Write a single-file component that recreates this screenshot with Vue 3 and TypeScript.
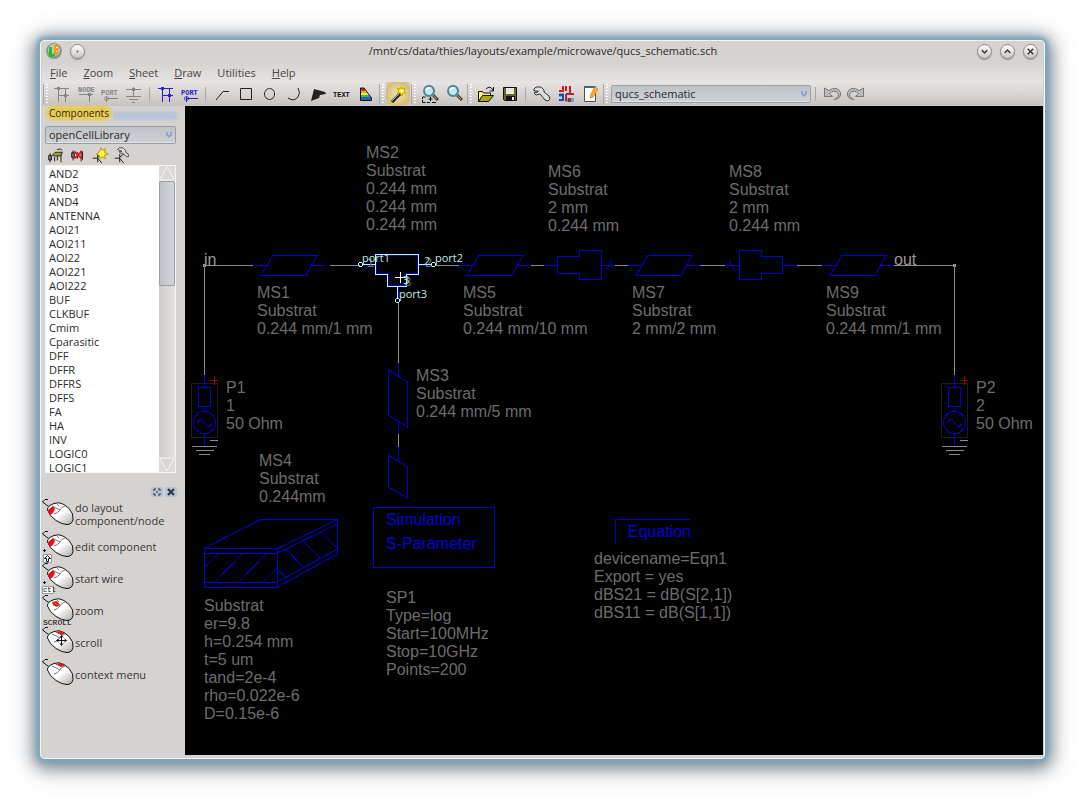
<script setup lang="ts">
import { ref } from 'vue'

interface Shape {
  d?: string
  fill?: string
  stroke?: string
  w?: number
  text?: string
  x?: number
  y?: number
}
interface Tool {
  name: string
  shapes: Shape[]
  active?: boolean
}
interface ToolGroup {
  handle: boolean
  tools: Tool[]
}
interface Label {
  x: number
  y: number
  lines: string[]
}

const grey = '#858585'
const blue = '#2a20cc'
const ink = '#222'

const wireShapes = (c: string): Shape[] => [
  { d: 'M4 6.5H19M8.5 5V20M15.5 6V20M8 13.5H19', stroke: c },
  { d: 'M7 5h3v3h-3zM14 12h3v3h-3z', fill: c },
]
const portShapes = (c: string): Shape[] => [
  { text: 'PORT', x: 3, y: 13, fill: c },
  { d: 'M9 16.5H20M8.500 14.500a2 2 0 1 0 .1 0M8.500 15V20', stroke: c },
]
const lens = (x: number): Shape[] => [
  { d: `M${x + 10} 13l5 5`, stroke: '#444', w: 3 },
  { d: `M${x + 10} 13l4 4`, stroke: '#c98f51', w: 1 },
  { d: `M${x + 6} 4a5 5 0 1 0 .1 0z`, fill: '#bfe8f2', stroke: '#4f8698', w: 2 },
  { d: `M${x + 2} 9c0-4 4-5 7-3-3 0-5 1-7 3`, fill: '#fff' },
]
const wrench = (dx: number, dy: number): Shape[] => [
  {
    d: `M${dx} ${dy + 2}l2-2 5 0 3 3 0 2 5 4 1 3-2 2-3-1-5-6-4 1-2-2 4-1 0-1-4 0z`,
    fill: '#ddd',
    stroke: '#333',
  },
]

const groups: ToolGroup[] = [
  {
    handle: true,
    tools: [
      { name: 'Wire crossing', shapes: wireShapes(grey) },
      {
        name: 'Node name',
        shapes: [
          { text: 'NODE', x: 4, y: 10, fill: grey },
          { d: 'M5 12.500H19M15.500 12V20', stroke: grey },
          { d: 'M14 11h3v3h-3z', fill: grey },
        ],
      },
      { name: 'Port', shapes: portShapes(grey) },
      {
        name: 'Ground',
        shapes: [
          { d: 'M4 7.500H19M11.500 5V14M4 14.500H19M7 17.500H16M10 20.500H13', stroke: grey },
          { d: 'M10 6h3v3h-3z', fill: grey },
        ],
      },
    ],
  },
  {
    handle: false,
    tools: [
      { name: 'Wire', shapes: wireShapes(blue) },
      { name: 'Wire port', shapes: portShapes(blue) },
    ],
  },
  {
    handle: false,
    tools: [
      { name: 'Line', shapes: [{ d: 'M6 18L13 9.500H19', stroke: ink }] },
      { name: 'Rectangle', shapes: [{ d: 'M6.500 6.500h11v11h-11z', stroke: ink }] },
      { name: 'Circle', shapes: [{ d: 'M11.500 6.500a5 5.500 0 1 0 .1 0z', stroke: ink }] },
      { name: 'Arc', shapes: [{ d: 'M16 6q3 5 0 9-4 5-10 1', stroke: ink }] },
      { name: 'Polygon', shapes: [{ d: 'M8 7l11 3 1 2-6 1-1 3-8 3z', fill: ink }] },
      { name: 'Text', shapes: [{ text: 'TEXT', x: 3, y: 15, fill: '#111' }] },
      {
        name: 'Layer colours',
        shapes: [
          { d: 'M6 6h5v3h-5z', fill: '#e02a1a' },
          { d: 'M6 9h7v2h-7z', fill: '#ffa51c' },
          { d: 'M6 11h8v2h-8z', fill: '#fff04a' },
          { d: 'M6 13h10v2h-10z', fill: '#28c62a' },
          { d: 'M6 15h11v3h-11z', fill: '#2857d8' },
          { d: 'M6.500 6v12.500H17.500V16L10 6z', stroke: '#111' },
        ],
      },
    ],
  },
  {
    handle: true,
    tools: [
      {
        name: 'Properties wand',
        active: true,
        shapes: [
          { d: 'M6 20l10-10', stroke: '#222', w: 3 },
          { d: 'M6 19l7-7', stroke: '#aaa', w: 1 },
          { d: 'M15 5l1 2 3-1-1 3 2 2-3 0-1 3-2-3-3 0 2-2-2-3 3 1z', fill: '#ffee22', stroke: '#c8a800' },
          { d: 'M15 8h2v2h-2z', fill: '#fff' },
        ],
      },
    ],
  },
  {
    handle: true,
    tools: [
      {
        name: 'Zoom to fit',
        shapes: [...lens(5), { d: 'M4.500 17v-2h3M4.500 18v2.500h3M9 20.500h3M14 20.500h4M12.500 15v4M10.500 17h4', stroke: '#111' }],
      },
      { name: 'Zoom', shapes: lens(5) },
    ],
  },
  {
    handle: true,
    tools: [
      {
        name: 'Open file',
        shapes: [
          { d: 'M4.500 19.500v-10h4l1 1.500h7v3', fill: '#f4f07c', stroke: '#111' },
          { d: 'M4.500 19.500l4-6h11l-5 6z', fill: '#a9a51d', stroke: '#111' },
          { d: 'M12 7q4-4 7 1M19.500 5v4h-4', stroke: '#111' },
        ],
      },
      {
        name: 'Save file',
        shapes: [
          { d: 'M5.500 5.500h13v13h-12l-1-1z', fill: '#66662c', stroke: '#111' },
          { d: 'M8 6h8v6h-8z', fill: '#e8e8e8' },
          { d: 'M8 14h9v5h-9z', fill: '#111' },
          { d: 'M14 15h2v3h-2z', fill: '#eee' },
        ],
      },
    ],
  },
  {
    handle: false,
    tools: [
      { name: 'Settings', shapes: wrench(4, 5) },
      {
        name: 'Layers',
        shapes: [
          { d: 'M5 11h5v4h-5zM11 16h9v4h-9z', fill: '#53b3aa' },
          { d: 'M5 13H9V19M5 18H9M12 12H19M15 16V20', stroke: '#1e49c4', w: 2 },
          { d: 'M5 9H9V4M12 12V19M12 4V9M16 4V12H20M16 16V20', stroke: '#df1818', w: 2 },
        ],
      },
      {
        name: 'Edit notes',
        shapes: [
          { d: 'M6.500 5.500h11v14h-11z', fill: '#fafcff', stroke: '#465164' },
          { d: 'M6 4h12v2H6z', fill: '#536078' },
          { d: 'M12 16l1-4 4-7 3 2-5 8z', fill: '#ffa928', stroke: '#e39226' },
        ],
      },
    ],
  },
]

const undo: Shape[] = [
  { d: 'M4.500 6v8.500h8l-3-3q4-4 8-1 3 4-3 7 7-1 6-7-3-7-12-2z', fill: '#bbb', stroke: '#777' },
]
const redo: Shape[] = [
  { d: 'M19.500 6v8.500h-8l3-3q-4-4-8-1-3 4 3 7-7-1-6-7 3-7 12-2z', fill: '#bbb', stroke: '#777' },
]

const libTools: Tool[] = [
  {
    name: 'Open library',
    shapes: [
      { d: 'M5.500 9v10M4 11.500h3v5h-3zM10.500 13v5M13.500 10v7M17.500 10v9', stroke: '#111' },
      { d: 'M8 11l3-3h3l5 0-2 4h-8z', fill: '#a5a223', stroke: '#222' },
      { d: 'M13 5q4-2 6 1', stroke: '#222' },
    ],
  },
  {
    name: 'Delete component',
    shapes: [
      { d: 'M6.500 6v11M5 8.500h3v5h-3zM11.500 8v7M15.500 6v12M17 7v9', stroke: '#111' },
      { d: 'M8 7l8 8M16 7l-8 8', stroke: '#e01515', w: 2 },
    ],
  },
  {
    name: 'New component',
    shapes: [
      { d: 'M4 14.500h6M9.500 10v9M10 13l4-3M10 15l4 5', stroke: '#111' },
      { d: 'M13 3l1.500 3L18 4l-1 4 4 2-4 1 1 4-4-2-2 2-1-4-3-1 3-2z', fill: '#fff34a', stroke: '#a99700' },
    ],
  },
  {
    name: 'Edit component',
    shapes: [
      { d: 'M4 14.500h6M9.500 10v9M10 13l4-3M10 15l4 5', stroke: '#111' },
      { d: 'M7 5l2-2h4l3 3v2l3 2v3l-2 0-4-4-3 0-1-2 3 0z', fill: '#ddd', stroke: '#444' },
    ],
  },
]

const menus = ['File', 'Zoom', 'Sheet', 'Draw', 'Utilities', 'Help']
const cells = [
  'AND2', 'AND3', 'AND4', 'ANTENNA', 'AOI21', 'AOI211', 'AOI22', 'AOI221', 'AOI222', 'BUF', 'CLKBUF',
  'Cmim', 'Cparasitic', 'DFF', 'DFFR', 'DFFRS', 'DFFS', 'FA', 'HA', 'INV', 'LOGIC0', 'LOGIC1',
]
const schematic = ref('qucs_schematic')
const library = ref('openCellLibrary')
const cell = ref('')

const leftKey = 'M6 12l5-4 2 3-2 4-3 2z'
const wheel = 'M10 8l5-1 3 4-3 2-4-2z'
const rightKey = 'M13 6l6-1 4 3-4 1z'
const hints = [
  { text: ['do layout', 'component/node'], red: leftKey, extra: '' },
  { text: ['edit component'], red: leftKey, extra: 'shift' },
  { text: ['start wire'], red: leftKey, extra: 'ctl' },
  { text: ['zoom'], red: wheel, extra: 'SCROLL' },
  { text: ['scroll'], red: rightKey, extra: 'move' },
  { text: ['context menu'], red: rightKey, extra: '' },
]

const labels: Label[] = [
  { x: 366, y: 158, lines: ['MS2', 'Substrat', '0.244 mm', '0.244 mm', '0.244 mm'] },
  { x: 548, y: 177, lines: ['MS6', 'Substrat', '2 mm', '0.244 mm'] },
  { x: 729, y: 177, lines: ['MS8', 'Substrat', '2 mm', '0.244 mm'] },
  { x: 257, y: 298, lines: ['MS1', 'Substrat', '0.244 mm/1 mm'] },
  { x: 463, y: 298, lines: ['MS5', 'Substrat', '0.244 mm/10 mm'] },
  { x: 632, y: 298, lines: ['MS7', 'Substrat', '2 mm/2 mm'] },
  { x: 826, y: 298, lines: ['MS9', 'Substrat', '0.244 mm/1 mm'] },
  { x: 416, y: 381, lines: ['MS3', 'Substrat', '0.244 mm/5 mm'] },
  { x: 226, y: 393, lines: ['P1', '1', '50 Ohm'] },
  { x: 976, y: 393, lines: ['P2', '2', '50 Ohm'] },
  { x: 259, y: 466, lines: ['MS4', 'Substrat', '0.244mm'] },
  { x: 204, y: 611, lines: ['Substrat', 'er=9.8', 'h=0.254 mm', 't=5 um', 'tand=2e-4', 'rho=0.022e-6', 'D=0.15e-6'] },
  { x: 386, y: 603, lines: ['SP1', 'Type=log', 'Start=100MHz', 'Stop=10GHz', 'Points=200'] },
  { x: 594, y: 564, lines: ['devicename=Eqn1', 'Export = yes', 'dBS21 = dB(S[2,1])', 'dBS11 = dB(S[1,1])'] },
]
const strips = [261, 467, 636, 830]
</script>

<template>
  <div class="desktop">
    <main class="window">
      <header class="titlebar">
        <svg class="app-logo" viewBox="0 0 16 16" aria-hidden="true">
          <circle cx="8" cy="8" r="8" fill="#8f9492" />
          <circle cx="8" cy="7" r="6" fill="#c7cac8" />
          <path d="M3 4h3v7l3-1v3l-6 1z" fill="#10c824" />
          <path d="M8 2h4l2 2-2 3 1 3-3 2-3-1 1-2z" fill="#f59a1c" />
          <path d="M10 4.500h2M10 8.500h1" stroke="#fff" />
        </svg>
        <button class="round" type="button" aria-label="Window menu">
          <svg viewBox="0 0 14 14"><circle cx="7" cy="7" r="1" /></svg>
        </button>
        <h1>/mnt/cs/data/thies/layouts/example/microwave/qucs_schematic.sch</h1>
        <button class="round" type="button" aria-label="Minimize">
          <svg viewBox="0 0 14 14"><path d="M4 5.500l3 3 3-3" /></svg>
        </button>
        <button class="round" type="button" aria-label="Maximize">
          <svg viewBox="0 0 14 14"><path d="M4 8.500l3-3 3 3" /></svg>
        </button>
        <button class="round" type="button" aria-label="Close">
          <svg viewBox="0 0 14 14"><path d="M4 4l6 6M10 4l-6 6" /></svg>
        </button>
      </header>

      <nav class="menubar">
        <button v-for="m in menus" :key="m" type="button">
          <u v-if="m !== 'Utilities'">{{ m[0] }}</u><template v-else>{{ m[0] }}</template>{{ m.slice(1) }}
        </button>
      </nav>

      <div class="toolbar">
        <template v-for="(g, gi) in groups" :key="gi">
          <span :class="g.handle ? 'grip' : 'rule'"></span>
          <button
            v-for="t in g.tools"
            :key="t.name"
            type="button"
            class="tool"
            :class="{ active: t.active }"
            :aria-label="t.name"
          >
            <svg viewBox="0 0 24 24">
              <template v-for="(s, si) in t.shapes" :key="si">
                <text v-if="s.text" :x="s.x" :y="s.y" :fill="s.fill">{{ s.text }}</text>
                <path v-else :d="s.d" :fill="s.fill ?? 'none'" :stroke="s.stroke" :stroke-width="s.w ?? 1" />
              </template>
            </svg>
          </button>
        </template>
        <span class="grip"></span>
        <label class="combo sheet">
          <select v-model="schematic" aria-label="Cell">
            <option>qucs_schematic</option>
          </select>
          <svg viewBox="0 0 8 8"><path d="M1 1h2v3H1zM5 1h2v3H5zM1 4h6L4 7z" /></svg>
        </label>
        <span class="rule"></span>
        <button type="button" class="tool" aria-label="Undo">
          <svg viewBox="0 0 24 24"><path v-for="s in undo" :key="s.d" :d="s.d" :fill="s.fill" :stroke="s.stroke" /></svg>
        </button>
        <button type="button" class="tool" aria-label="Redo">
          <svg viewBox="0 0 24 24"><path v-for="s in redo" :key="s.d" :d="s.d" :fill="s.fill" :stroke="s.stroke" /></svg>
        </button>
      </div>

      <div class="body">
        <aside class="sidebar">
          <div class="dock-title"><h2>Components</h2><span></span></div>
          <label class="combo">
            <select v-model="library" aria-label="Library">
              <option>openCellLibrary</option>
            </select>
            <svg viewBox="0 0 8 8"><path d="M1 1h2v3H1zM5 1h2v3H5zM1 4h6L4 7z" /></svg>
          </label>
          <div class="lib-tools">
            <button v-for="t in libTools" :key="t.name" type="button" :aria-label="t.name">
              <svg viewBox="0 0 24 22">
                <path
                  v-for="(s, si) in t.shapes"
                  :key="si"
                  :d="s.d"
                  :fill="s.fill ?? 'none'"
                  :stroke="s.stroke"
                  :stroke-width="s.w ?? 1"
                />
              </svg>
            </button>
          </div>
          <div class="cells">
            <select v-model="cell" size="22" aria-label="Components">
              <option v-for="c in cells" :key="c">{{ c }}</option>
            </select>
            <div class="scroll">
              <button type="button" aria-label="Scroll up">
                <svg viewBox="0 0 16 15"><path d="M1 14L8 1l7 13z" /></svg>
              </button>
              <div class="track"><div class="thumb"></div></div>
              <button type="button" aria-label="Scroll down">
                <svg viewBox="0 0 16 15"><path d="M1 1l7 13L15 1z" /></svg>
              </button>
            </div>
          </div>
          <div class="dock-buttons">
            <button type="button" aria-label="Float panel">
              <svg viewBox="0 0 12 10"><path d="M3 4V2h2M7 2h2v2M9 6v2H7M5 8H3V6M6 4v2" /></svg>
            </button>
            <button type="button" aria-label="Close panel">
              <svg viewBox="0 0 12 10"><path d="M3 2l6 6M9 2L3 8" stroke-width="2" /></svg>
            </button>
          </div>
          <ul class="hints">
            <li v-for="h in hints" :key="h.text[0]">
              <svg viewBox="0 0 33 32">
                <defs>
                  <linearGradient id="shell" x1="0" y1="0" x2="1" y2="1">
                    <stop offset="0.500" stop-color="#fff" />
                    <stop offset="1" stop-color="#aaa" />
                  </linearGradient>
                </defs>
                <path d="M6 1.500H3L.5 4l4 3 2 1" fill="none" stroke="#111" />
                <path
                  d="M5.500 12Q5 8 12 5.500q5-2 10 1l5 4q5 5 4 11-1 5-6 5-5 0-11-4-7-5-8.500-10.500z"
                  fill="url(#shell)"
                  stroke="#111"
                />
                <path :d="h.red" fill="#f01010" />
                <path d="M10 8l8 4M12 16q4-1 6-4 1-3 5-4M15 6l2 2" fill="none" stroke="#777" />
                <path v-if="h.extra === 'move'" d="M19.500 10v9M15 14.500h9M18 11.500l1.500-2 1.500 2M18 17.500l1.500 2 1.500-2M16.500 13l-2 1.500 2 1.500M22.500 13l2 1.500-2 1.500" fill="none" stroke="#111" />
                <path v-if="h.extra === 'shift' || h.extra === 'ctl'" d="M1 20.500h3M2.500 19v3" stroke="#111" />
                <template v-if="h.extra === 'shift'">
                  <path d="M1.500 24.500h8v8h-8z" fill="#fff" stroke="#999" />
                  <path d="M5.500 25.500l3 3h-2v3h-2v-3h-2z" fill="none" stroke="#111" />
                </template>
                <template v-if="h.extra === 'ctl'">
                  <path d="M.5 24.500h11v7H.5z" fill="#fff" stroke="#999" />
                  <text x="1" y="30">ctl</text>
                </template>
                <text v-if="h.extra === 'SCROLL'" x="1" y="31" class="wide">SCROLL</text>
              </svg>
              <span><template v-for="(l, i) in h.text" :key="l"><br v-if="i" />{{ l }}</template></span>
            </li>
          </ul>
        </aside>

        <section class="canvas" aria-label="Schematic">
          <svg>
            <g transform="translate(-185 -106)" fill="none">
              <g class="wire">
                <path d="M204.500 265.500H253M330 265.500H360M436 265.500H459M531 265.500H544M615 265.500H629M700 265.500H725M797 265.500H822M893 265.500H954.500" />
                <path d="M204.500 265.500V375M954.500 265.500V375M398.500 303V363M398.500 434V447" />
                <path d="M203 264h3v3h-3zM953 264h3v3h-3z" class="dot" />
              </g>
              <g class="part">
                <path v-for="x in strips" :key="x" :d="`M${x + 12} 255.500h44l-11 20h-45zM${x - 8} 265.500h14M${x + 50} 265.500h14`" />
                <path d="M557.500 256.500H579.500V250.500H601.500V279.500H579.500V273.500H557.500zM544 265.500H557M602 265.500H615M606 271L612 260" />
                <path d="M739.500 250.500H761.500V256.500H782.500V273.500H761.500V279.500H739.500zM725 265.500H739M783 265.500H797M729 260L735 271" />
                <path d="M388.500 370L407.500 382V427L388.500 415zM398.500 363V377M398.500 421V434M398.500 447V461" />
                <path d="M388.500 455L407.500 467V498L388.500 487z" />
                <path d="M204.500 548.500H277.500V587.500H204.500zM204 553.500H277M204 582.500H277M204 548.500L260.500 519.500H337.500L277.500 548.500M337.500 519V554M277.500 553L337.500 524M277.500 582L337.500 549M277.500 587L337.500 554" />
                <path d="M204 568L219 553M215 582L243 553M239 582L267 553M263 582L277 568M277 569L286 577M286 549L303 567M303 541L320 558M321 532L337 548" />
                <path d="M373.500 507.500H494.500V567.500H373.500zM690 519.500H615.500V544" />
              </g>
              <g v-for="dx in [0, 750]" :key="dx" :transform="`translate(${dx} 0)`">
                <path class="bounds" d="M191.500 383.500H217.500V437.500H191.500z" />
                <path class="part" d="M204.500 375V387M198.500 387.500H210.500V406.500H198.500zM204.500 407V411M204.500 433V446M204.500 411.500a11 11 0 1 0 .1 0zM197 423q4-7 7.500 0t7.500 0" />
                <path class="wire" d="M210 440.500H218M192 446.500H217M196 450.500H214M199 454.500H210" />
                <path class="plus" d="M210 380.500H218M214.500 376V385" />
              </g>
              <g class="tee-shadow">
                <path d="M376.500 255.500H417.500V273.500H405.500V285.500H388.500V273.500H376.500zM363 265.500H376M419 265.500H431M398.500 287V298" />
              </g>
              <g class="tee">
                <path d="M375.500 254.500H418.500V274.500H406.500V286.500H387.500V274.500H375.500zM363 264.500H375M419 264.500H431M397.500 287V298" />
                <circle cx="360.500" cy="264.500" r="2" />
                <circle cx="433.500" cy="264.500" r="2" />
                <circle cx="397.500" cy="300.500" r="2" />
                <path d="M395 277.500H406M400.500 272V283" class="cursor" />
              </g>
              <g class="value">
                <text v-for="l in labels" :key="`${l.x}-${l.y}`">
                  <tspan v-for="(line, i) in l.lines" :key="i" :x="l.x" :y="l.y + i * 18">{{ line }}</tspan>
                </text>
              </g>
              <g class="pin">
                <text x="367" y="267">1</text>
                <text x="425" y="267">2</text>
                <text x="404" y="286">3</text>
              </g>
              <g class="net">
                <text x="204" y="265">in</text>
                <text x="894" y="265">out</text>
              </g>
              <g class="block">
                <text x="386" y="525">Simulation</text>
                <text x="386" y="549">S-Parameter</text>
                <text x="628" y="537">Equation</text>
              </g>
              <g class="port">
                <text x="362" y="262">port1</text>
                <text x="435" y="262">port2</text>
                <text x="399" y="298">port3</text>
                <text x="424" y="265">2</text>
                <text x="403" y="284">3</text>
              </g>
            </g>
          </svg>
        </section>
      </div>
    </main>
  </div>
</template>

<style>
body {
  margin: 0;
  background: #fff;
}
</style>

<style scoped>
* {
  box-sizing: border-box;
}
.desktop {
  display: flex;
  min-height: 100vh;
  padding: 40px;
  overflow: hidden;
  font: 11px/14px 'Open Sans', 'Noto Sans', sans-serif;
  color: #2c2a29;
}
button {
  padding: 0;
  border: 0;
  background: none;
  color: inherit;
  font: inherit;
}
svg {
  display: block;
}
.window {
  display: flex;
  flex: 1;
  flex-direction: column;
  min-width: 0;
  padding: 0 2px 4px;
  border-radius: 5px;
  background: #d6d2cf;
  box-shadow: inset 0 0 0 1px #f2f4f5, 0 0 4px 3px #76a9c2, 0 3px 16px 6px rgba(70, 84, 98, 0.6),
    0 4px 26px 6px rgba(90, 100, 110, 0.35);
}
.titlebar {
  display: flex;
  align-items: center;
  height: 22px;
  padding: 0 5px 0 4px;
  gap: 8px;
}
.app-logo {
  width: 16px;
  height: 16px;
}
h1 {
  flex: 1;
  margin: 0;
  padding-left: 24px;
  font-size: 11px;
  font-weight: 400;
  text-align: center;
}
.round {
  width: 15px;
  height: 15px;
  border: 1px solid #8d8a88;
  border-radius: 50%;
  background: linear-gradient(#fff, #c9c6c3);
  box-shadow: 0 1px 1px #999;
}
.round path,
.round circle {
  fill: none;
  stroke: #333;
  stroke-width: 1.5;
}
.round circle {
  fill: #555;
  stroke: none;
}
.menubar {
  display: flex;
  gap: 16px;
  height: 20px;
  padding: 3px 8px 0;
  background: linear-gradient(#d6d2cf, #e5e3e2);
}
.menubar button {
  height: 16px;
  color: #4a4644;
}
.toolbar {
  display: flex;
  align-items: center;
  height: 24px;
  background: linear-gradient(#e6e4e3, #c7c2bf);
}
.tool {
  flex: none;
  width: 24px;
  height: 24px;
}
.tool svg {
  width: 24px;
  height: 24px;
}
.tool text,
.hints text {
  font: bold 7px 'Liberation Mono', monospace;
}
.hints text {
  font-weight: 400;
}
.hints .wide {
  font-size: 8px;
}
.active {
  background: radial-gradient(#e6d69e 30%, #d3bf79 70%, #d7d2c8);
}
.rule,
.grip {
  flex: none;
  width: 8px;
  height: 20px;
  background: linear-gradient(#aaa6a3, #aaa6a3) 3px 3px / 1px 14px no-repeat;
}
.grip {
  background: linear-gradient(#aaa6a3, #aaa6a3) 1px 0 / 1px 20px no-repeat,
    radial-gradient(#fff 40%, transparent 50%) 4px 2px / 2px 3px repeat-y;
}
.combo {
  position: relative;
  display: block;
  height: 18px;
}
.sheet {
  flex: 0 1 200px;
  margin: 0 1px;
}
.combo select {
  display: block;
  width: 100%;
  height: 18px;
  padding: 0 3px;
  border: 1px solid #999fa8;
  border-radius: 2px;
  background: linear-gradient(#bfc3c8, #cfd1d4);
  box-shadow: inset 0 -1px #e0e2e4;
  color: #2c2a29;
  font: inherit;
  appearance: none;
}
.combo svg {
  position: absolute;
  top: 5px;
  right: 3px;
  width: 8px;
  height: 8px;
  fill: #86a5ce;
}
.body {
  display: flex;
  flex: 1;
  min-height: 0;
}
.sidebar {
  display: flex;
  flex: none;
  flex-direction: column;
  width: 143px;
  padding: 0 9px 0 3px;
}
.dock-title {
  display: flex;
  align-items: center;
  height: 20px;
  padding: 0 0 6px 4px;
}
.dock-title h2 {
  margin: 0;
  border-radius: 4px;
  background: #e8cb4e;
  box-shadow: 0 0 3px 3px #e8cb4e;
  font-size: 10px;
  font-weight: 500;
  line-height: 8px;
}
.dock-title span {
  flex: 1;
  height: 7px;
  margin: 5px 0 0 5px;
  background: #bac6d7;
  box-shadow: 0 0 3px 1px #bac6d7;
}
.lib-tools {
  display: flex;
  height: 21px;
}
.lib-tools button {
  width: 22px;
}
.lib-tools svg {
  width: 22px;
  height: 20px;
}
.cells {
  display: flex;
  height: 308px;
  border: 1px solid #f4f4f4;
  background: #fff;
}
.cells select {
  flex: 1;
  min-width: 0;
  padding: 0;
  overflow: hidden;
  border: 0;
  outline: 0;
  background: #fff;
  color: #2c2a29;
  font: inherit;
}
.cells option {
  height: 14px;
  min-height: 14px;
  padding: 0 3px;
  line-height: 14px;
}
.scroll {
  display: flex;
  flex-direction: column;
  width: 16px;
  background: #dedad8;
}
.scroll svg {
  width: 16px;
  height: 15px;
  fill: #dad6d3;
  stroke: #f6f6f6;
}
.track {
  flex: 1;
  background: linear-gradient(90deg, #cfcac8, #e4e1df);
}
.thumb {
  height: 38%;
  border: 1px solid #999fa8;
  border-radius: 2px;
  background: linear-gradient(90deg, #bfc3c8, #d2d4d8);
}
.dock-buttons {
  display: flex;
  justify-content: flex-end;
  gap: 2px;
  height: 25px;
  margin-right: -1px;
  padding-top: 14px;
}
.dock-buttons button {
  width: 12px;
  height: 10px;
  background: #b6c4d6;
}
.dock-buttons svg {
  width: 12px;
  height: 10px;
  fill: none;
  stroke: #333;
}
.hints {
  margin: 0 -9px 0 -3px;
  padding: 0;
  list-style: none;
}
.hints li {
  display: flex;
  align-items: center;
  height: 32px;
  color: #3a3735;
  line-height: 13px;
}
.hints svg {
  width: 33px;
  height: 32px;
  overflow: visible;
}
.canvas {
  flex: 1;
  min-width: 0;
  background: #000;
}
.canvas svg {
  width: 100%;
  height: 100%;
  shape-rendering: crispEdges;
}
.wire {
  stroke: #8c8c8c;
}
.dot {
  fill: #8c8c8c;
  stroke: none;
}
.part {
  stroke: #0000cc;
}
.bounds {
  stroke: #1c1c1c;
}
.plus {
  stroke: #a00000;
}
.tee-shadow {
  stroke: #0000d0;
}
.tee {
  stroke: #bff4fa;
}
.cursor {
  stroke: #fff;
}
.value,
.net,
.block {
  font: 16px 'Liberation Sans', Arial, sans-serif;
}
.value {
  fill: #6c6c6c;
}
.pin {
  fill: #6c6c6c;
  font: 13px 'Liberation Sans', Arial, sans-serif;
}
.net {
  fill: #999;
}
.block {
  fill: #0000d8;
}
.port {
  fill: #bfeef0;
}
</style>
